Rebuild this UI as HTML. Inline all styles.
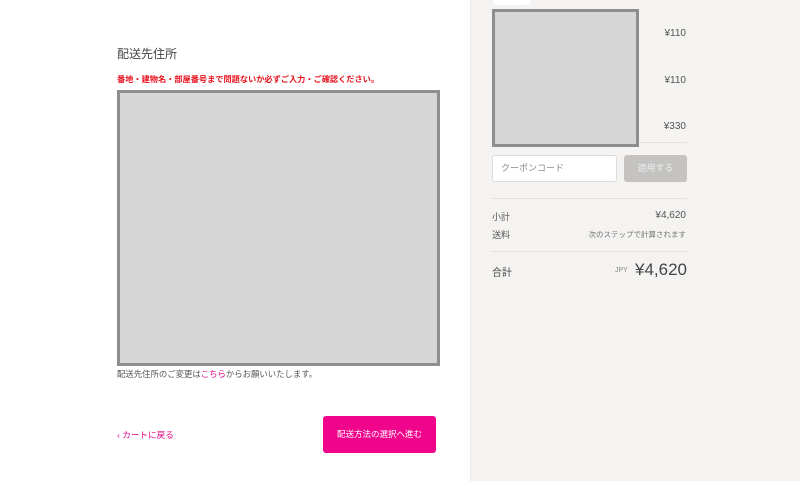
<!DOCTYPE html>
<html><head><meta charset="utf-8"><style>
*{margin:0;padding:0;box-sizing:border-box}
body{width:800px;height:481px;overflow:hidden;background:#fff;font-family:"Liberation Sans","Noto Sans CJK JP",sans-serif;color:#333;position:relative}
.a{position:absolute;white-space:nowrap}
.ph{position:absolute;background:#d6d6d6;border:3px solid #8e8e8e}
#right{position:absolute;left:470px;top:0;width:330px;height:481px;background:#f4f3f1;border-left:1px solid #ecebe9}
.line{position:absolute;height:1px;background:#e2e1df}
</style></head><body>
<div class="a" style="left:117px;top:45px;font-size:12px;color:#444">配送先住所</div>
<div class="a" style="left:117px;top:73px;font-size:8.2px;font-weight:bold;color:#e8101d">番地・建物名・部屋番号まで問題ないか必ずご入力・ご確認ください。</div>
<div class="ph" style="left:117px;top:90px;width:323px;height:276px"></div>
<div class="a" style="left:117px;top:368px;font-size:8.4px;color:#555">配送先住所のご変更は<span style="color:#e4007f">こちら</span>からお願いいたします。</div>
<div class="a" style="left:117px;top:429px;font-size:8.6px;color:#e4007f">‹ カートに戻る</div>
<div class="a" style="left:323px;top:416px;width:113px;height:37px;background:#f0048c;border-radius:3px;color:#fff;font-size:8.5px;text-align:center;line-height:37px">配送方法の選択へ進む</div>
<div id="right"></div>
<div class="a" style="left:493px;top:0;width:37px;height:5px;background:#fff;border-radius:0 0 3px 3px"></div>
<div class="ph" style="left:492px;top:9px;width:147px;height:138px"></div>
<div class="a" style="right:114px;top:28px;font-size:10px;color:#555">¥110</div>
<div class="a" style="right:114px;top:75px;font-size:10px;color:#555">¥110</div>
<div class="a" style="right:114px;top:121px;font-size:10px;color:#555">¥330</div>
<div class="line" style="left:639px;top:142px;width:48px"></div>
<div class="a" style="left:492px;top:155px;width:125px;height:27px;background:#fff;border:1px solid #dcdcdc;border-radius:3px;font-size:9px;color:#888;line-height:25px;padding-left:8px">クーポンコード</div>
<div class="a" style="left:624px;top:155px;width:63px;height:27px;background:#c4c3c1;border-radius:3px;font-size:9px;color:#eee;line-height:27px;text-align:center">適用する</div>
<div class="line" style="left:492px;top:198px;width:195px"></div>
<div class="a" style="left:492px;top:210px;font-size:9px;color:#555">小計</div>
<div class="a" style="right:114px;top:210px;font-size:10px;color:#555">¥4,620</div>
<div class="a" style="left:492px;top:228px;font-size:9px;color:#555">送料</div>
<div class="a" style="right:114px;top:229px;font-size:7.5px;color:#777">次のステップで計算されます</div>
<div class="line" style="left:492px;top:251px;width:195px"></div>
<div class="a" style="left:492px;top:264px;font-size:10px;color:#444">合計</div>
<div class="a" style="left:615px;top:267px;font-size:7px;color:#888">JPY</div>
<div class="a" style="right:113px;top:260px;font-size:17px;color:#444">¥4,620</div>
</body></html>
